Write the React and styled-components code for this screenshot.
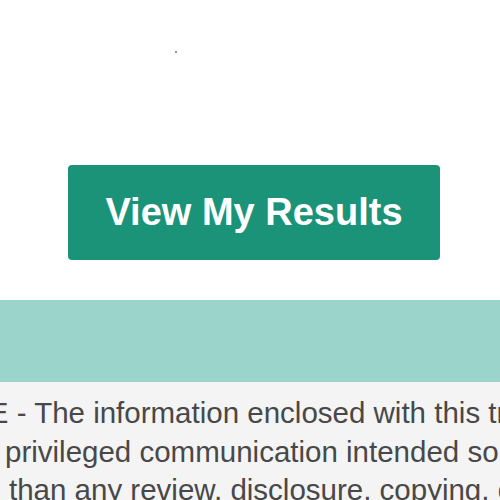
import React from "react";
import styled, { createGlobalStyle } from "styled-components";

const GlobalStyle = createGlobalStyle`
  html, body {
    margin: 0;
    padding: 0;
    background: #ffffff;
    font-family: "Liberation Sans", Arial, sans-serif;
  }
`;

const Page = styled.div`
  width: 500px;
  height: 500px;
  overflow: hidden;
  display: flex;
  flex-direction: column;
`;

const TopArea = styled.div`
  height: 300px;
  padding-top: 51px;
  box-sizing: border-box;
  display: flex;
  flex-direction: column;
`;

const Dot = styled.span`
  display: block;
  width: 2px;
  height: 2px;
  margin-left: 175px;
  background: #777;
  border-radius: 1px;
`;

const ResultsButton = styled.button`
  margin: 112px 0 0 68px;
  width: 372px;
  height: 95px;
  border: none;
  border-radius: 4px;
  background: #1a9379;
  color: #ffffff;
  font-family: "Liberation Sans", Arial, sans-serif;
  font-weight: 700;
  font-size: 38px;
  display: flex;
  align-items: center;
  justify-content: center;
  padding: 0;
  cursor: pointer;
`;

const Band = styled.div`
  height: 82px;
  background: #9ad4ca;
`;

const Footer = styled.div`
  flex: 1;
  background: #f4f4f4;
  padding-top: 12px;
  overflow: hidden;
`;

const Line = styled.div`
  white-space: nowrap;
  font-size: 29.5px;
  line-height: 38.5px;
  color: #484848;
  margin-left: ${(p) => p.$shift}px;
`;

export default function App() {
  return (
    <>
      <GlobalStyle />
      <Page>
        <TopArea>
          <Dot />
          <ResultsButton>View My Results</ResultsButton>
        </TopArea>
        <Band />
        <Footer>
          <Line $shift={-103}>
            NOTICE - The information enclosed with this transmission is the
          </Line>
          <Line $shift={5}>
            privileged communication intended solely for the recipient
          </Line>
          <Line $shift={9}>
            than any review, disclosure, copying, distribution or use
          </Line>
        </Footer>
      </Page>
    </>
  );
}
